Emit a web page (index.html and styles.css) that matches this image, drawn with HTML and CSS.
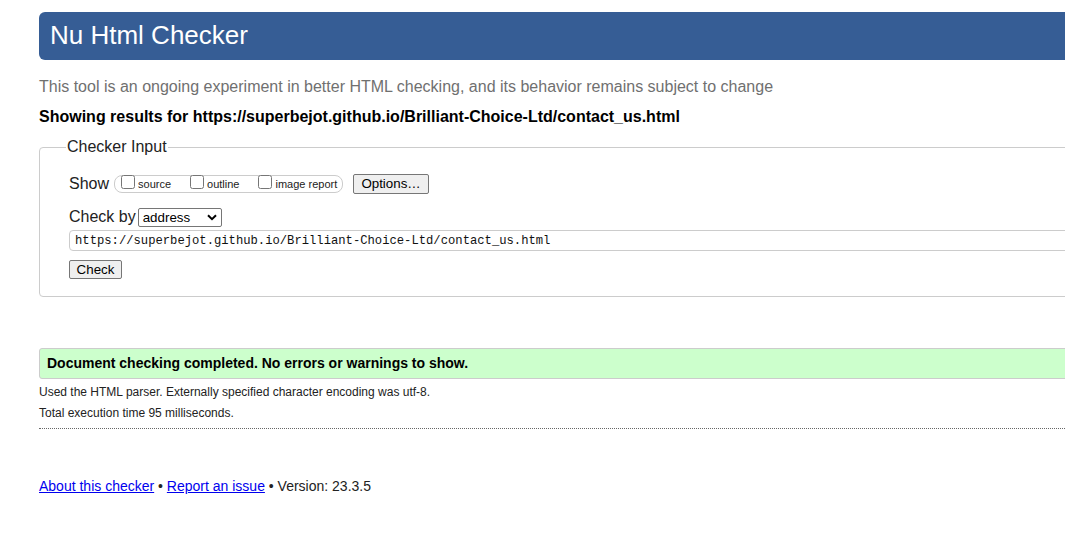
FILE: index.html
```html
<!DOCTYPE html>
<html lang="en">
<head>
<meta charset="utf-8">
<title>Nu Html Checker</title>
<link rel="stylesheet" href="styles.css">
</head>
<body>
<div class="page">
  <h1 class="banner">Nu Html Checker</h1>
  <p class="tagline">This tool is an ongoing experiment in better HTML checking, and its behavior remains subject to change</p>
  <p class="showing">Showing results for https://superbejot.github.io/Brilliant-Choice-Ltd/contact_us.html</p>
  <fieldset class="input-box">
    <legend class="legend">Checker Input</legend>
    <div class="row show-row">
      <span class="label">Show</span>
      <span class="opts">
        <label class="opt"><input type="checkbox" class="cb"><span>source</span></label>
        <label class="opt"><input type="checkbox" class="cb"><span>outline</span></label>
        <label class="opt"><input type="checkbox" class="cb"><span>image report</span></label>
      </span>
      <button class="btn options">Options…</button>
    </div>
    <div class="row checkby-row">
      <span class="label">Check by</span>
      <span class="select">address<svg class="chev" width="10" height="7" viewBox="0 0 10 7"><path d="M1 1.2 L5 5.2 L9 1.2" fill="none" stroke="#000" stroke-width="2"/></svg></span>
    </div>
    <div class="url">https://superbejot.github.io/Brilliant-Choice-Ltd/contact_us.html</div>
    <button class="btn check">Check</button>
  </fieldset>
  <div class="success">Document checking completed. No errors or warnings to show.</div>
  <p class="detail">Used the HTML parser. Externally specified character encoding was utf-8.</p>
  <p class="detail last">Total execution time 95 milliseconds.</p>
  <p class="footer"><a href="#">About this checker</a> • <a href="#">Report an issue</a> • Version: 23.3.5</p>
</div>
</body>
</html>
```
FILE: styles.css
```css
html, body {
  margin: 0;
  padding: 0;
  overflow: hidden;
  background: #fff;
}
body {
  font-family: "Liberation Sans", Arial, sans-serif;
  color: #000;
}
.page {
  width: 1100px;
  padding: 12px 0 0 39px;
}
.banner {
  margin: 0;
  height: 48px;
  line-height: 47px;
  padding-left: 11px;
  background: #365d95;
  color: #fff;
  font-size: 26px;
  font-weight: normal;
  border-radius: 6px 0 0 6px;
}
.tagline {
  margin: 18px 0 0;
  font-size: 16px;
  line-height: 18px;
  color: #707070;
}
.showing {
  margin: 12px 0 0;
  font-size: 16px;
  line-height: 18px;
  font-weight: bold;
}
.input-box {
  margin: 12px 0 0;
  padding: 18px 0 17px 29px;
  border: 1px solid #ccc;
  border-radius: 4px;
  min-width: 0;
}
.legend {
  font-size: 16px;
  line-height: 18px;
  padding: 0 1px;
  margin-left: -3px;
  color: #222;
}
.row {
  display: flex;
  align-items: center;
}
.label {
  font-size: 16px;
  line-height: 18px;
  color: #222;
}
.show-row {
  height: 20px;
}
.opts {
  display: flex;
  align-items: center;
  margin-left: 5px;
  height: 16px;
  width: 227px;
  border: 1px solid #ccc;
  border-radius: 8px;
  box-sizing: content-box;
}
.opt {
  display: flex;
  align-items: center;
  font-size: 11px;
  line-height: 13px;
  color: #222;
}
.opt:nth-child(1) { margin-left: 6px; }
.opt:nth-child(2) { margin-left: 19px; }
.opt:nth-child(3) { margin-left: 19px; }
.cb {
  margin: 0 3px 0 0;
  width: 14px;
  height: 14px;
  position: relative;
  top: -2px;
}
.btn {
  font-family: "Liberation Sans", Arial, sans-serif;
  font-size: 13.333px;
  background: #efefef;
  border: 1px solid #767676;
  border-radius: 2px;
  color: #000;
  padding: 0;
  height: 20px;
  line-height: 18px;
}
.options {
  margin-left: 10px;
  width: 76px;
}
.checkby-row {
  margin-top: 14px;
  height: 18px;
}
.select {
  display: flex;
  align-items: center;
  justify-content: space-between;
  box-sizing: border-box;
  margin-left: 2px;
  width: 84px;
  height: 19px;
  padding: 0 4px 0 4px;
  border: 1px solid #767676;
  border-radius: 2px;
  font-size: 13.333px;
}
.chev {
  display: block;
}
.url {
  margin-top: 4px;
  height: 21px;
  box-sizing: border-box;
  border: 1px solid #ccc;
  border-radius: 4px 0 0 4px;
  padding-left: 5px;
  font-family: "Liberation Mono", "DejaVu Sans Mono", monospace;
  font-size: 12.2px;
  line-height: 20px;
  color: #111;
}
.check {
  display: block;
  margin-top: 9px;
  width: 53px;
  height: 19px;
  line-height: 17px;
}
.success {
  margin-top: 51px;
  height: 31px;
  box-sizing: border-box;
  background: #ccffcc;
  border: 1px solid #ccc;
  border-radius: 3px 0 0 3px;
  padding-left: 7px;
  font-size: 14px;
  line-height: 29px;
  font-weight: bold;
}
.detail {
  margin: 6px 0 0;
  font-size: 12px;
  line-height: 14px;
  color: #222;
}
.detail.last {
  margin-top: 7px;
  padding-bottom: 8px;
  border-bottom: 1px dotted #666;
}
.footer {
  margin: 49px 0 0;
  font-size: 14px;
  line-height: 16px;
  color: #222;
}
.footer a {
  color: #0000ee;
}
```
